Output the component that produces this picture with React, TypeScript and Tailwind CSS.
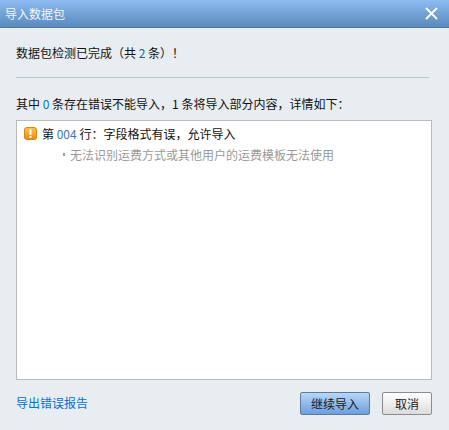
export default function App() {
  const font = { fontFamily: '"Noto Sans CJK SC", "Liberation Sans", sans-serif' };
  return (
    <div className="w-[449px] h-[430px] flex flex-col bg-[#e8edf1] text-[12px] text-[#111] overflow-hidden" style={font}>
      <div className="h-[28px] shrink-0 flex items-center justify-between pl-[5px] pr-[11px] bg-gradient-to-b from-[#8cbcf1] to-[#5a8abd] border-b border-[#51779f] text-white">
        <span className="opacity-90">导入数据包</span>
        <svg width="13" height="13" viewBox="0 0 13 13" fill="none" stroke="white" strokeWidth="1.8"><path d="M1 1l11 11M12 1L1 12" /></svg>
      </div>
      <div className="flex-1 flex flex-col pl-[16px] pr-[17px]">
        <div className="h-[18px] mt-[16px] leading-[18px]">数据包检测已完成（共 <span className="text-[#1c5fa8]">2</span> 条）！</div>
        <div className="mt-[15px] w-[413px] h-px bg-[#bcc6c6]" />
        <div className="mt-[17px] h-[18px] leading-[18px] whitespace-nowrap">其中 <span className="text-[#0a6fd6]">0</span> 条存在错误不能导入，1 条将导入部分内容，详情如下：</div>
        <div className="mt-[7px] h-[260px] w-[416px] bg-white border border-[#b8bcbf] pl-[7px] pt-[4px]">
          <div className="flex items-center h-[17px] gap-[5px] whitespace-nowrap">
            <svg width="13" height="13" viewBox="0 0 13 13">
              <defs><linearGradient id="w" x1="0" y1="0" x2="0" y2="1"><stop offset="0" stopColor="#fbc44e" /><stop offset="1" stopColor="#ee8a12" /></linearGradient></defs>
              <rect x="0.5" y="0.5" width="12" height="12" rx="2.5" fill="url(#w)" stroke="#d9860f" />
              <rect x="5.5" y="2.5" width="2" height="5.5" fill="white" />
              <rect x="5.5" y="9" width="2" height="2" fill="white" />
            </svg>
            <span>第 <span className="text-[#3b78b8]">004</span> 行：字段格式有误，允许导入</span>
          </div>
          <div className="mt-[4px] pl-[39px] h-[17px] flex items-center gap-[5px] text-[#9a9a9a] whitespace-nowrap">
            <span className="w-[2px] h-[3px] bg-[#8fa3b0]" />
            <span>无法识别运费方式或其他用户的运费模板无法使用</span>
          </div>
        </div>
        <div className="mt-[12px] flex items-start justify-between w-[416px] h-[23px]">
          <span className="text-[#0a6fd6] leading-[22px]">导出错误报告</span>
          <div className="flex gap-[12px]">
            <button className="w-[70px] h-[23px] rounded-[2px] border border-[#5d7a9c] bg-gradient-to-b from-[#b7d6f8] to-[#6d9fdc] text-[#1a1a1a]">继续导入</button>
            <button className="w-[50px] h-[23px] rounded-[2px] border border-[#8c8c8c] bg-gradient-to-b from-white to-[#dcdcdc] text-[#1a1a1a]">取消</button>
          </div>
        </div>
      </div>
    </div>
  );
}
